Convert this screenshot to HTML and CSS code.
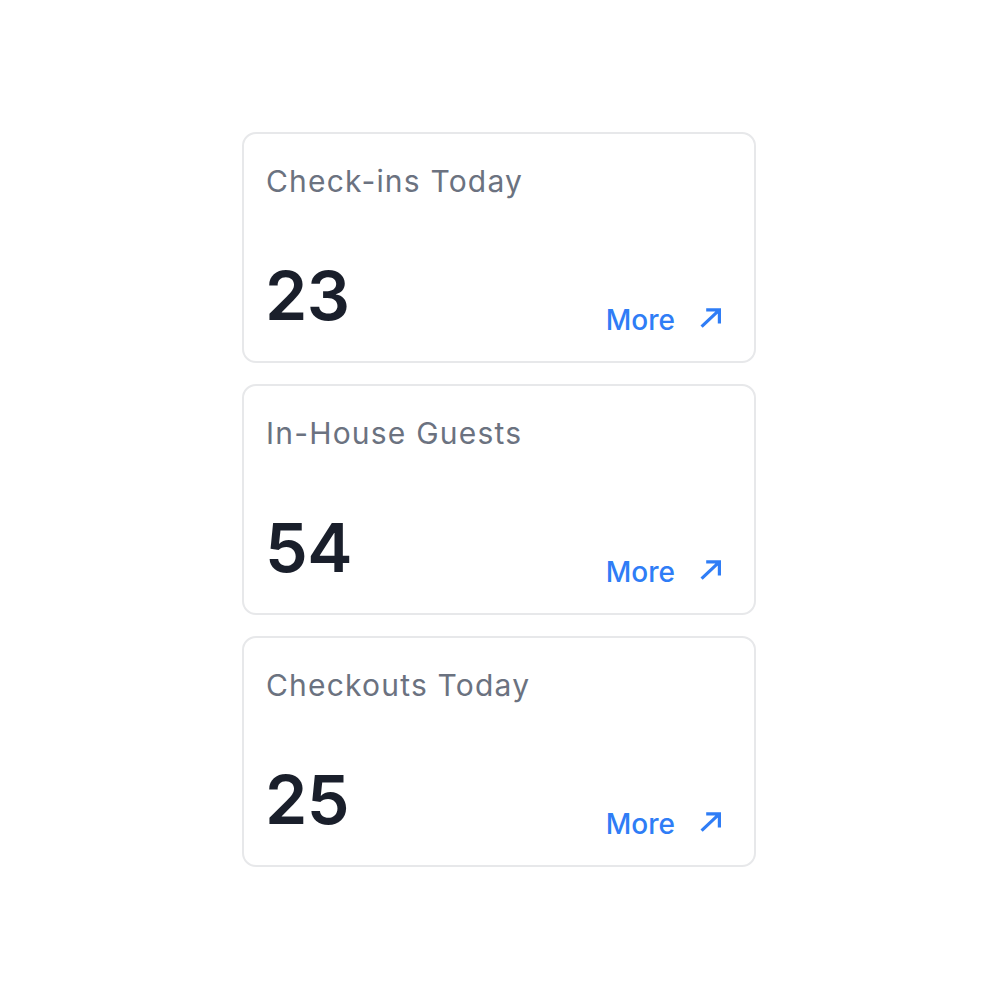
FILE: index.html
```html
<!DOCTYPE html>
<html lang="en">
<head>
<meta charset="utf-8">
<title>Stats</title>
<link rel="stylesheet" href="styles.css">
</head>
<body>
<main class="stack">
  <section class="card">
    <h2 class="card-title">Check-ins Today</h2>
    <div class="card-bottom">
      <span class="card-value">23</span>
      <a class="card-link" href="#">More
        <svg class="arrow" viewBox="0 0 22 20" fill="none" stroke="currentColor" stroke-width="3.2" stroke-linecap="butt" stroke-linejoin="miter"><path d="M1.6 18.6L19.4 1.9M6.2 1.9H19.4V15.4"/></svg>
      </a>
    </div>
  </section>
  <section class="card">
    <h2 class="card-title">In-House Guests</h2>
    <div class="card-bottom">
      <span class="card-value">54</span>
      <a class="card-link" href="#">More
        <svg class="arrow" viewBox="0 0 22 20" fill="none" stroke="currentColor" stroke-width="3.2" stroke-linecap="butt" stroke-linejoin="miter"><path d="M1.6 18.6L19.4 1.9M6.2 1.9H19.4V15.4"/></svg>
      </a>
    </div>
  </section>
  <section class="card">
    <h2 class="card-title">Checkouts Today</h2>
    <div class="card-bottom">
      <span class="card-value">25</span>
      <a class="card-link" href="#">More
        <svg class="arrow" viewBox="0 0 22 20" fill="none" stroke="currentColor" stroke-width="3.2" stroke-linecap="butt" stroke-linejoin="miter"><path d="M1.6 18.6L19.4 1.9M6.2 1.9H19.4V15.4"/></svg>
      </a>
    </div>
  </section>
</main>
</body>
</html>
```
FILE: styles.css
```css
* { box-sizing: border-box; }
html, body { margin: 0; padding: 0; background: #ffffff; }
body {
  font-family: Inter, "Noto Sans", sans-serif;
  min-height: 100vh;
  display: flex;
  align-items: center;
  justify-content: center;
}
.stack {
  display: flex;
  flex-direction: column;
  gap: 21px;
}
.card {
  width: 514px;
  height: 231px;
  border: 2px solid #e7e8ea;
  border-radius: 14px;
  padding: 29px 32px 27px 22px;
  display: flex;
  flex-direction: column;
  justify-content: space-between;
}
.card-title {
  margin: 0;
  font-size: 30px;
  line-height: 36px;
  font-weight: 400;
  letter-spacing: 1.2px;
  color: #6b7280;
}
.card-bottom {
  display: flex;
  align-items: flex-end;
  justify-content: space-between;
}
.card-value {
  font-size: 68px;
  line-height: 68px;
  font-weight: 600;
  color: #1a1f2b;
  letter-spacing: -0.5px;
  margin-left: -1px;
  margin-bottom: 5px;
}
.card-link {
  display: flex;
  align-items: center;
  gap: 25px;
  font-size: 28px;
  line-height: 28px;
  font-weight: 500;
  color: #2f7df6;
  text-decoration: none;
}
.arrow { width: 22px; height: 20px; display: block; margin-top: -4px; }
```
